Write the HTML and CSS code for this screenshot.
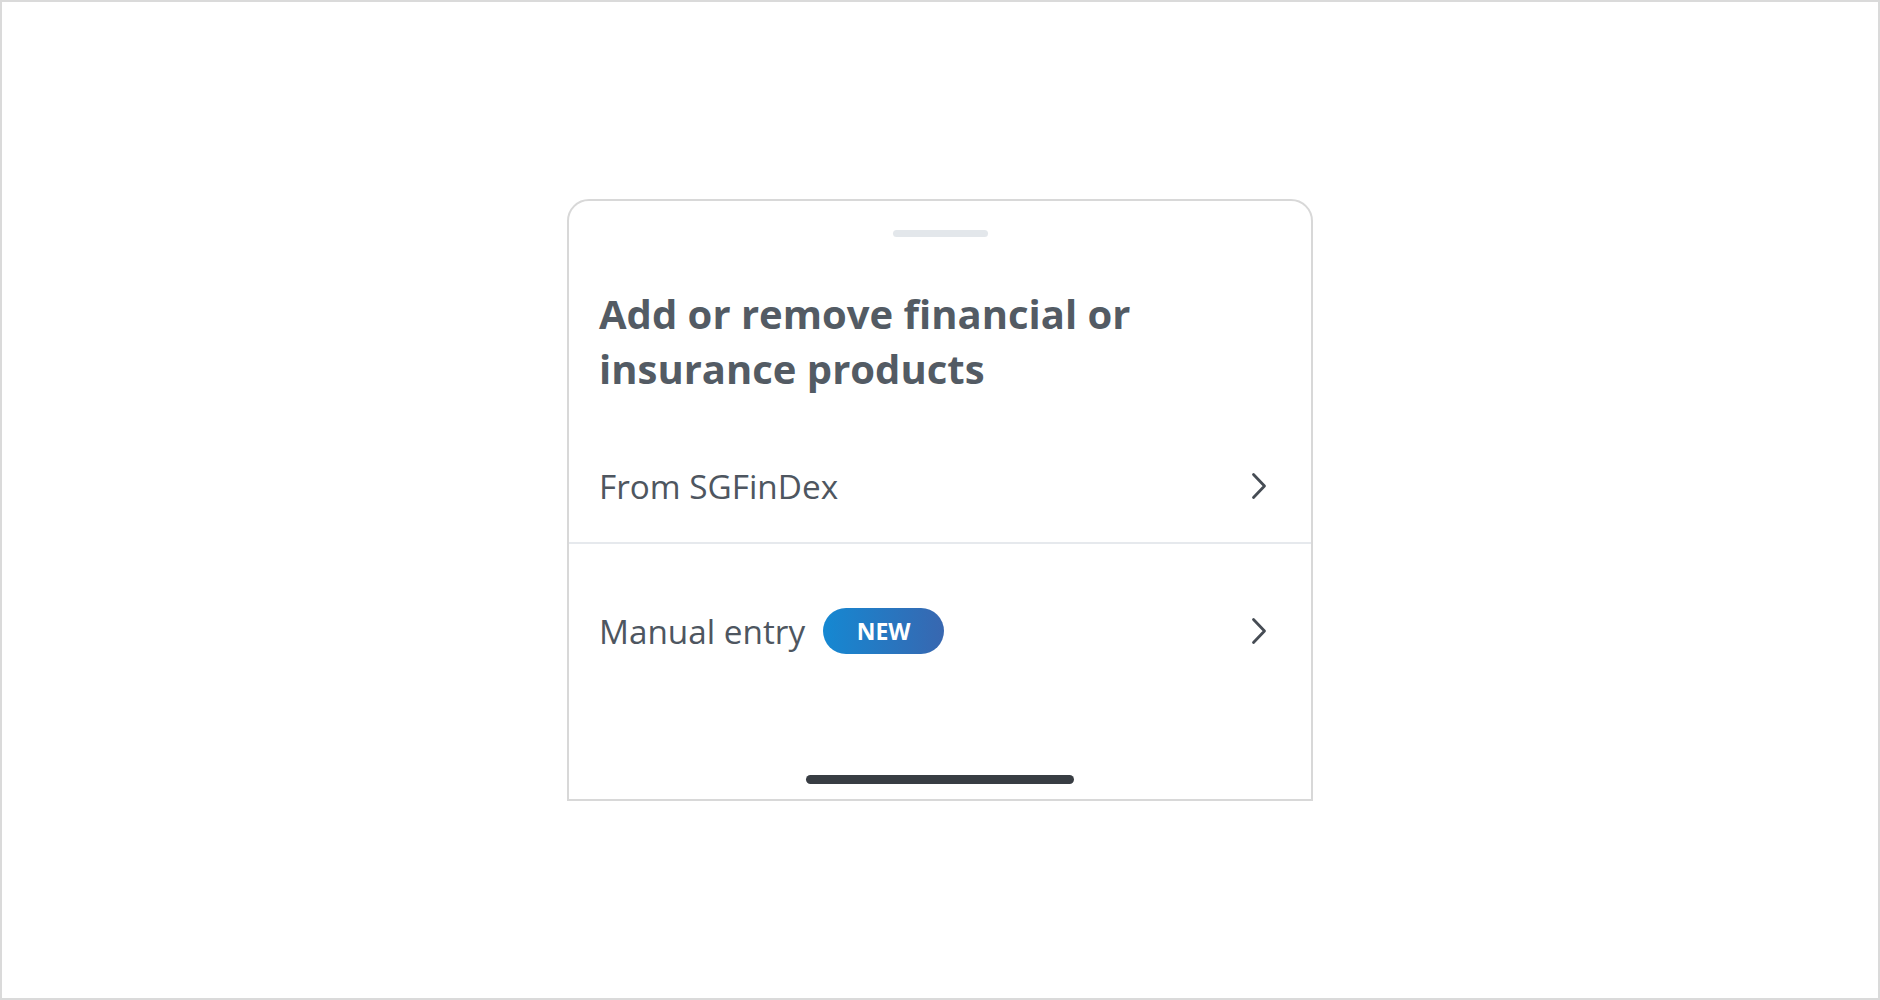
FILE: index.html
```html
<!DOCTYPE html>
<html lang="en">
<head>
  <meta charset="UTF-8">
  <meta name="viewport" content="width=device-width, initial-scale=1.0">
  <title>Add or remove products</title>
  <link rel="stylesheet" href="styles.css">
</head>
<body>
  <div class="frame">
    <div class="sheet">
      <div class="handle"></div>
      <h1 class="sheet-title">Add or remove financial or insurance products</h1>

      <a class="option option-first" href="#">
        <span class="option-label">From SGFinDex</span>
        <svg class="chevron" width="16" height="28" viewBox="0 0 16 28">
          <polyline points="2.5,2.5 13.5,14 2.5,25.5" />
        </svg>
      </a>

      <a class="option option-last" href="#">
        <span class="option-label">Manual entry</span>
        <span class="badge">NEW</span>
        <svg class="chevron" width="16" height="28" viewBox="0 0 16 28">
          <polyline points="2.5,2.5 13.5,14 2.5,25.5" />
        </svg>
      </a>

      <div class="home-bar"></div>
    </div>
  </div>
</body>
</html>
```

FILE: styles.css
```css
html, body {
  margin: 0;
  padding: 0;
  background: #fff;
}

body {
  font-family: "Open Sans", "Noto Sans", Arial, sans-serif;
  color: #505862;
}

.frame {
  box-sizing: border-box;
  width: 100vw;
  height: 100vh;
  border: 2px solid #dadada;
  display: flex;
  align-items: center;
  justify-content: center;
}

.sheet {
  box-sizing: border-box;
  width: 746px;
  height: 602px;
  border: 2px solid #d8d8d8;
  border-radius: 22px 22px 0 0;
  background: #fff;
  display: flex;
  flex-direction: column;
}

.handle {
  align-self: center;
  width: 95px;
  height: 7px;
  margin-top: 29px;
  border-radius: 4px;
  background: #e3e7eb;
}

.sheet-title {
  margin: 49px 0 0;
  padding: 0 30px;
  font-size: 40px;
  line-height: 55px;
  font-weight: 700;
  color: #535b64;
}

.option {
  display: flex;
  align-items: center;
  padding: 0 44px 0 30px;
  text-decoration: none;
  color: #4e5660;
}

.option-first {
  height: 112px;
  margin-top: 34px;
  border-bottom: 2px solid #e6e9ed;
}

.option-last {
  height: 174px;
}

.option-label {
  font-size: 33.3px;
}

.badge {
  margin-left: 18px;
  width: 121px;
  height: 46px;
  border-radius: 23px;
  background: linear-gradient(90deg, #1588d2, #3867b0);
  color: #fff;
  font-size: 23px;
  font-weight: 700;
  display: flex;
  align-items: center;
  justify-content: center;
}

.chevron {
  margin-left: auto;
  fill: none;
  stroke: #464c54;
  stroke-width: 2.8;
  stroke-linecap: round;
  stroke-linejoin: round;
}

.home-bar {
  align-self: center;
  width: 268px;
  height: 9px;
  margin-top: auto;
  margin-bottom: 15px;
  border-radius: 5px;
  background: #383d43;
}
```
